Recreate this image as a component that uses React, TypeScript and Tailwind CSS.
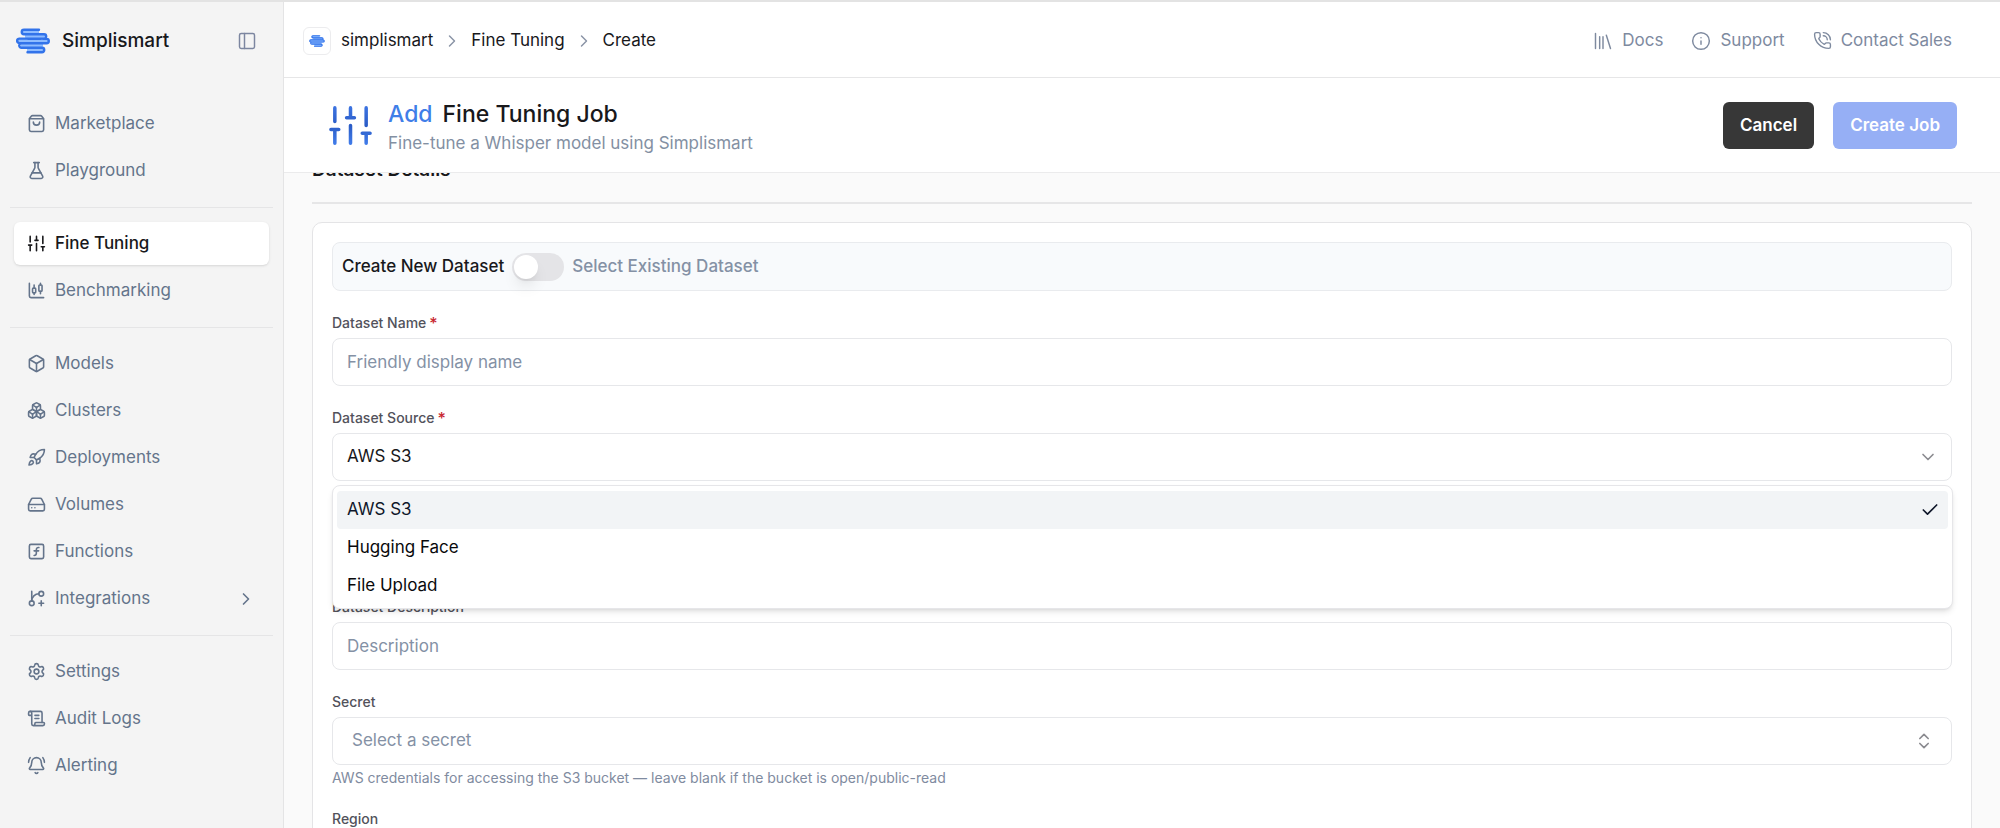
import type { ComponentType, ReactNode } from "react";
import {
  BellRing,
  Box,
  Boxes,
  ChartCandlestick,
  Check,
  ChevronDown,
  ChevronRight,
  ChevronsUpDown,
  FlaskConical,
  GitBranchPlus,
  HardDrive,
  Info,
  PanelLeft,
  PhoneCall,
  Rocket,
  ScrollText,
  Settings,
  ShoppingBag,
  SquareFunction,
} from "lucide-react";

type IconProps = { className?: string; strokeWidth?: number };
type NavItem = { label: string; icon: ComponentType<IconProps>; active?: boolean; more?: boolean };

function Sliders({ className, strokeWidth = 2 }: IconProps) {
  return (
    <svg viewBox="0 0 24 24" className={className} fill="none" stroke="currentColor" strokeWidth={strokeWidth} strokeLinecap="round" aria-hidden="true">
      <path d="M4 21v-7M4 10V3M12 21v-9M12 8V3M20 21v-5M20 12V3M2 14h4M10 8h4M18 16h4" />
    </svg>
  );
}

function GradientSliders({ className }: IconProps) {
  return (
    <svg viewBox="0 0 24 24" className={className} fill="none" stroke="url(#sliders-fill)" strokeWidth={1.8} strokeLinecap="round" aria-hidden="true">
      <defs>
        <linearGradient id="sliders-fill" gradientUnits="userSpaceOnUse" x1="0" y1="3" x2="0" y2="21">
          <stop offset="0" stopColor="#3b72e0" />
          <stop offset="0.5" stopColor="#2b5cc6" />
          <stop offset="1" stopColor="#3f7ae8" />
        </linearGradient>
      </defs>
      <path d="M4 21v-7M4 10V3M12 21v-9M12 8V3M20 21v-5M20 12V3M2 14h4M10 8h4M18 16h4" />
    </svg>
  );
}

function Books({ className }: IconProps) {
  return (
    <svg viewBox="0 0 24 24" className={className} fill="none" stroke="currentColor" strokeWidth={1.75} strokeLinecap="round" aria-hidden="true">
      <path d="M3 3v18M8 7v14M12 7v14M16 5l5 16" />
    </svg>
  );
}

function Logo({ className }: { className?: string }) {
  return (
    <svg viewBox="0 0 34 26" className={className} fill="none" aria-hidden="true">
      <g fill="#8ebcff">
        <rect x="6" y="1" width="17" height="6" rx="2" />
        <rect x="9" y="5" width="20" height="6" rx="2" />
        <rect x="2" y="10" width="30" height="6" rx="2" />
        <rect x="5" y="14" width="22" height="6" rx="2" />
        <rect x="11" y="19" width="17" height="6" rx="2" />
      </g>
      <path
        d="M23 1.7H8a2.2 2.2 0 0 0 0 4.5H28a2.2 2.2 0 0 1 0 4.4H3.4a2.2 2.2 0 0 0 0 4.5H24M12 10.8H25M27.5 10.9H30.6a2.2 2.2 0 0 1 0 4.4H5.5a2.2 2.2 0 0 0 0 4.5H26a2.2 2.2 0 0 1 0 4.5H11.5"
        stroke="#3273ea"
        strokeWidth="2.4"
        strokeLinecap="round"
        strokeLinejoin="round"
      />
    </svg>
  );
}

const navGroups: NavItem[][] = [
  [
    { label: "Marketplace", icon: ShoppingBag },
    { label: "Playground", icon: FlaskConical },
  ],
  [
    { label: "Fine Tuning", icon: Sliders, active: true },
    { label: "Benchmarking", icon: ChartCandlestick },
  ],
  [
    { label: "Models", icon: Box },
    { label: "Clusters", icon: Boxes },
    { label: "Deployments", icon: Rocket },
    { label: "Volumes", icon: HardDrive },
    { label: "Functions", icon: SquareFunction },
    { label: "Integrations", icon: GitBranchPlus, more: true },
  ],
  [
    { label: "Settings", icon: Settings },
    { label: "Audit Logs", icon: ScrollText },
    { label: "Alerting", icon: BellRing },
  ],
];

const sources = ["AWS S3", "Hugging Face", "File Upload"];

function Sidebar() {
  return (
    <aside className="flex w-[284px] shrink-0 flex-col border-r border-[#e4e4e5] bg-[#f4f4f4]">
      <div className="flex h-[76px] items-center pt-[2px] pr-[26px] pl-4">
        <Logo className="h-[26px] w-[34px]" />
        <span className="ml-3 text-[19px] font-medium text-[#18181b]">Simplismart</span>
        <button type="button" aria-label="Toggle sidebar" className="ml-auto text-[#7c86a0]">
          <PanelLeft className="size-5" strokeWidth={1.75} />
        </button>
      </div>
      <nav className="flex flex-col px-[10px] pt-[10px]">
        {navGroups.map((group, i) => (
          <ul key={i} className="flex flex-col gap-1 border-b border-[#e5e5e6] px-1 pt-[14px] pb-[15px] last:border-b-0">
            {group.map(({ label, icon: Icon, active, more }) => (
              <li key={label}>
                <a
                  href="#"
                  aria-current={active ? "page" : undefined}
                  className={
                    active
                      ? "flex h-[43px] items-center gap-[9px] rounded-md bg-white px-[13px] text-[17px] font-medium text-[#18181b] shadow-sm"
                      : "flex h-[43px] items-center gap-[9px] rounded-md px-[13px] text-[17px] text-[#64748b]"
                  }
                >
                  <Icon className="size-[19px]" strokeWidth={2} />
                  {label}
                  {more && <ChevronRight className="ml-auto size-5" strokeWidth={2} />}
                </a>
              </li>
            ))}
          </ul>
        ))}
      </nav>
    </aside>
  );
}

function TopBar() {
  return (
    <header className="flex h-[76px] shrink-0 items-center justify-between border-b border-[#e6e6e7] bg-white pt-[2px] pr-12 pl-[19px] text-[17px]">
      <nav aria-label="Breadcrumb">
        <ol className="flex items-center gap-[9px] text-[#18181b]">
          <li className="flex items-center gap-[10px]">
            <span className="flex size-7 items-center justify-center rounded-md border border-[#ececee]">
              <Logo className="h-3 w-4" />
            </span>
            <a href="#">simplismart</a>
          </li>
          <li aria-hidden="true"><ChevronRight className="size-5 text-[#8a94a6]" strokeWidth={1.75} /></li>
          <li><a href="#">Fine Tuning</a></li>
          <li aria-hidden="true"><ChevronRight className="size-5 text-[#8a94a6]" strokeWidth={1.75} /></li>
          <li aria-current="page">Create</li>
        </ol>
      </nav>
      <div className="flex items-center gap-7 text-[#7e8a9f]">
        <a href="#" className="flex items-center gap-[9px]"><Books className="size-5" />Docs</a>
        <a href="#" className="flex items-center gap-[9px]"><Info className="size-5" strokeWidth={1.75} />Support</a>
        <a href="#" className="flex items-center gap-[9px]"><PhoneCall className="size-[19px]" strokeWidth={1.75} />Contact Sales</a>
      </div>
    </header>
  );
}

function TitleBar() {
  return (
    <div className="z-10 flex h-[95px] shrink-0 items-center justify-between border-b border-[#ebebec] bg-white px-[43px] pt-px">
      <div className="flex items-center gap-[14px]">
        <GradientSliders className="size-[47px]" />
        <div className="pt-1">
          <h1 className="flex gap-[10px] text-[23px] leading-[30px] font-medium text-[#18181b]">
            <span className="text-[#3f7ee8]">Add</span>
            <span>Fine Tuning Job</span>
          </h1>
          <p className="text-[17px] leading-7 text-[#8390a3]">Fine-tune a Whisper model using Simplismart</p>
        </div>
      </div>
      <div className="flex gap-[19px] text-[17px] font-semibold text-white">
        <button type="button" className="h-[47px] rounded-md bg-[#373737] px-[17px]">Cancel</button>
        <button type="button" className="h-[47px] rounded-md bg-[#96aff5] px-[17px]">Create Job</button>
      </div>
    </div>
  );
}

function Field({ id, label, required, children, className = "" }: { id: string; label: string; required?: boolean; children: ReactNode; className?: string }) {
  return (
    <div className={className}>
      <label htmlFor={id} className="flex h-[31px] items-center text-sm font-medium text-[#52525b]">
        {label}
        {required && <span className="ml-[3px] text-base leading-4 text-[#c8262f]">*</span>}
      </label>
      {children}
    </div>
  );
}

const control = "block h-12 w-full appearance-none rounded-lg border border-[#e6e7ea] bg-white text-[17px] outline-none placeholder:text-[#8491a5]";

function DatasetForm() {
  return (
    <section className="rounded-[10px] border border-[#e4e4e6] bg-white p-[19px] pb-10">
      <div className="flex h-[49px] items-center gap-2 rounded-lg border border-[#e9ebee] bg-[#f8fafc] px-[9px] text-[17px] font-medium">
        <label htmlFor="dataset-mode" className="text-[#18181b]">Create New Dataset</label>
        <input
          id="dataset-mode"
          type="checkbox"
          role="switch"
          className="h-7 w-[52px] appearance-none rounded-full bg-[#e4e4e7] p-[2px] before:block before:size-6 before:rounded-full before:bg-white before:shadow-lg checked:before:ml-6"
        />
        <label htmlFor="dataset-mode" className="text-[#8491a5]">Select Existing Dataset</label>
      </div>

      <Field id="dataset-name" label="Dataset Name" required className="mt-4">
        <input id="dataset-name" type="text" placeholder="Friendly display name" className={`${control} px-[14px]`} />
      </Field>

      <Field id="dataset-source" label="Dataset Source" required className="mt-4 mb-[110px]">
        <div className="relative">
          <select id="dataset-source" defaultValue="AWS S3" className={`${control} px-[14px] text-[#18181b]`}>
            {sources.map((s) => (
              <option key={s}>{s}</option>
            ))}
          </select>
          <ChevronDown className="pointer-events-none absolute top-[14px] right-[14px] size-5 text-[#8b8b90]" strokeWidth={2} />
          <ul role="listbox" aria-label="Dataset Source" className="absolute top-full -right-px left-0 z-10 mt-1 rounded-lg border border-[#e6e6e9] bg-white px-1 pt-[5px] pb-[3px] text-[17px] text-[#09090b] shadow-md">
            {sources.map((s, i) => (
              <li
                key={s}
                role="option"
                aria-selected={i === 0}
                className={
                  i === 0
                    ? "flex h-[38px] items-center justify-between rounded-[4px] bg-[#f2f4f6] pr-2 pl-[10px] text-[#0f172a]"
                    : "flex h-[38px] items-center px-[10px]"
                }
              >
                {s}
                {i === 0 && <Check className="size-5" strokeWidth={2} />}
              </li>
            ))}
          </ul>
        </div>
      </Field>

      <Field id="dataset-description" label="Dataset Description">
        <input id="dataset-description" type="text" placeholder="Description" className={`${control} px-[14px]`} />
      </Field>

      <Field id="secret" label="Secret" className="mt-4">
        <div className="relative">
          <select id="secret" defaultValue="" className={`${control} px-[19px] text-[#8491a5]`}>
            <option value="">Select a secret</option>
          </select>
          <ChevronsUpDown className="pointer-events-none absolute top-[14px] right-[18px] size-5 text-[#8b8b90]" strokeWidth={2} />
        </div>
        <p className="pt-[3px] text-sm leading-5 text-[#7f8ba0]">
          AWS credentials for accessing the S3 bucket — leave blank if the bucket is open/public-read
        </p>
      </Field>

      <p className="mt-[21px] text-sm font-medium text-[#52525b]">Region</p>
    </section>
  );
}

export default function App() {
  return (
    <div className="flex h-screen overflow-hidden border-t-2 border-[#e3e3e3] bg-[#fafafa] font-['Inter',sans-serif] antialiased">
      <Sidebar />
      <div className="flex min-w-0 flex-1 flex-col">
        <TopBar />
        <TitleBar />
        <main className="min-h-0 flex-1 overflow-hidden px-7">
          <h2 className="-mt-[17px] border-b-2 border-[#e6e6e7] pb-[18px] text-[19px] leading-7 font-semibold text-[#18181b]">Dataset Details</h2>
          <div className="pt-[18px]">
            <DatasetForm />
          </div>
        </main>
      </div>
    </div>
  );
}
